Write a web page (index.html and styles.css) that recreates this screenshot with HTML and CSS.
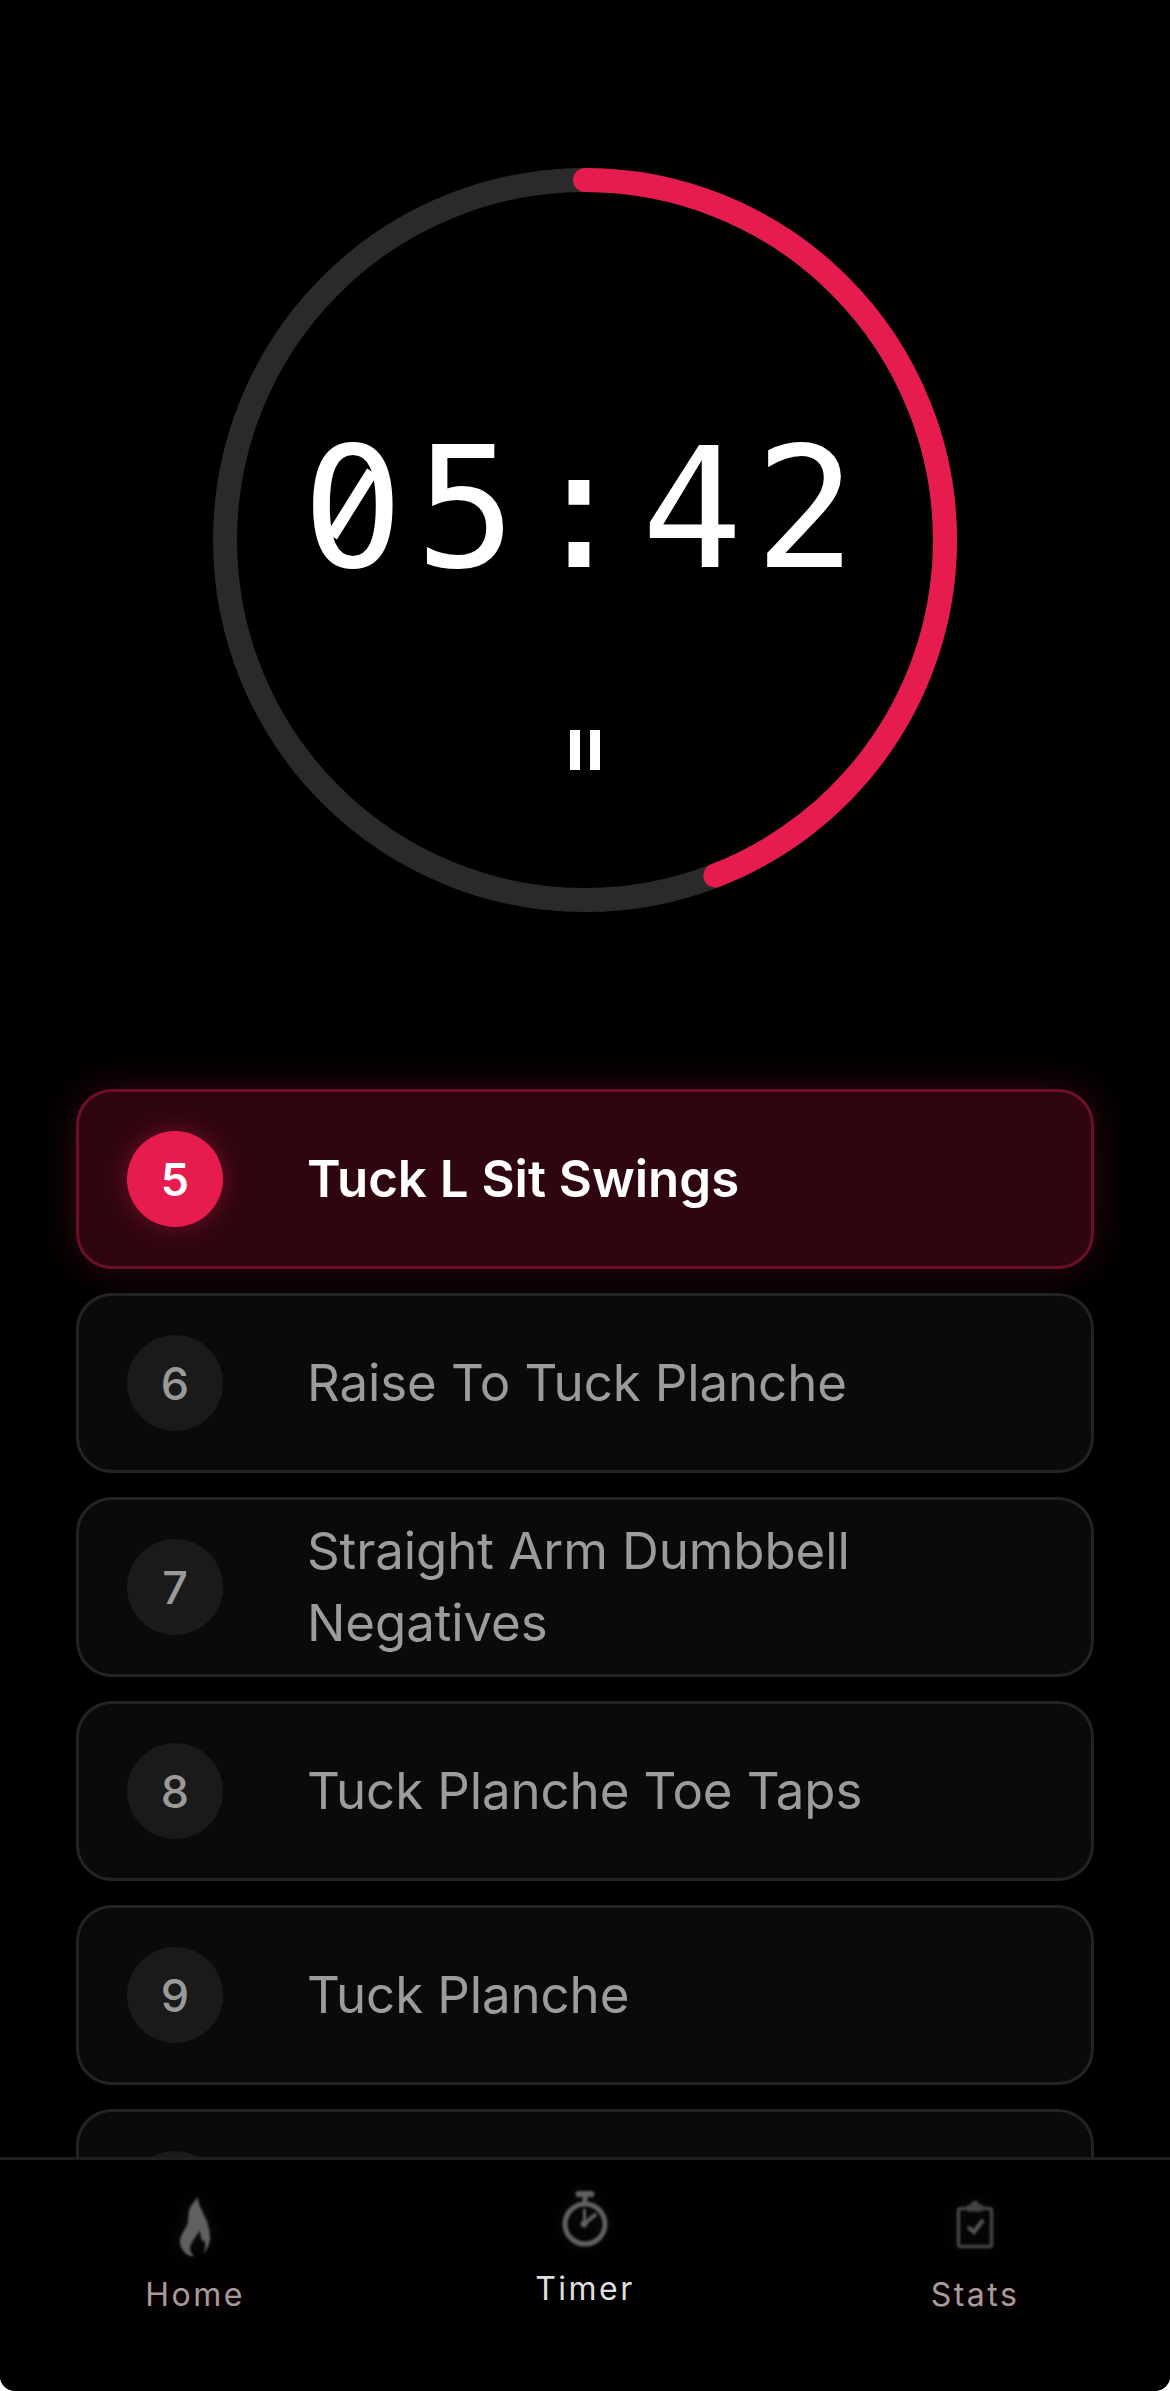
FILE: index.html
```html
<!DOCTYPE html>
<html lang="en">
<head>
    <meta charset="UTF-8">
    <meta name="viewport" content="width=device-width, initial-scale=1.0">
    <title>Workout Timer</title>
    <link rel="stylesheet" href="styles.css">
</head>
<body>

<div class="app">
    <section class="timer">
        <svg class="ring" viewBox="0 0 744 744">
            <circle class="ring-track" cx="372" cy="372" r="360"></circle>
            <circle class="ring-progress" cx="372" cy="372" r="360" pathLength="100" stroke-dasharray="44.1 100" transform="rotate(-90 372 372)"></circle>
        </svg>
        <div class="time"><span class="zero">0</span>5:42</div>
        <div class="pause"><span></span><span></span></div>
    </section>

    <div class="list">
        <div class="item active">
            <div class="num">5</div>
            <div class="name">Tuck L Sit Swings</div>
        </div>
        <div class="item">
            <div class="num">6</div>
            <div class="name">Raise To Tuck Planche</div>
        </div>
        <div class="item">
            <div class="num">7</div>
            <div class="name">Straight Arm Dumbbell Negatives</div>
        </div>
        <div class="item">
            <div class="num">8</div>
            <div class="name">Tuck Planche Toe Taps</div>
        </div>
        <div class="item">
            <div class="num">9</div>
            <div class="name">Tuck Planche</div>
        </div>
        <div class="item">
            <div class="num">10</div>
            <div class="name"></div>
        </div>
    </div>

    <nav class="tabs">
        <div class="tab">
            <svg class="tab-icon" viewBox="0 0 60 72">
                <path fill="#606060" d="M32.7 7C33 13 37 21 40 27C43 33 45 41 45 48C45 54 42 60 37.7 64C40 60 41 56 39.5 50L37.3 52L34.3 40C33 45 26 51 25 58C24.7 61 27 64 29 66L25 66C19 63 15 58 15 51C15 45 20 40 22 35C24 30 23 27 24 20C25 16 30 11 32.7 7Z"></path>
            </svg>
            <span>Home</span>
        </div>
        <div class="tab current">
            <svg class="tab-icon" viewBox="0 0 60 72">
                <g fill="none" stroke="#606060" stroke-width="5">
                    <circle cx="30" cy="40" r="20"></circle>
                    <path d="M30 18V10"></path>
                    <path d="M23.5 10H36.5" stroke-width="6" stroke-linecap="round"></path>
                    <path d="M29 40L40 31" stroke-width="4" stroke-linecap="round"></path>
                    <path d="M29.5 40V26" stroke-width="3" stroke-linecap="round"></path>
                </g>
                <circle cx="29" cy="40" r="3.5" fill="#606060"></circle>
            </svg>
            <span>Timer</span>
        </div>
        <div class="tab">
            <svg class="tab-icon" viewBox="0 0 60 72">
                <g fill="none" stroke="#444" stroke-width="3.5">
                    <rect x="13.5" y="18.5" width="33" height="38" rx="2"></rect>
                    <path d="M24 20V16H27C28 11 32 11 33 16H36V20Z" fill="#444" stroke-width="3"></path>
                    <path d="M23 37L29 42L38 30" stroke="#555" stroke-width="4"></path>
                </g>
            </svg>
            <span>Stats</span>
        </div>
    </nav>
</div>

</body>
</html>
```

FILE: styles.css
```css
* {
    box-sizing: border-box;
}
html, body {
    margin: 0;
    padding: 0;
    background: #fff;
}
body {
    font-family: Inter, "Liberation Sans", sans-serif;
}
.app {
    width: 1170px;
    height: 2391px;
    overflow: hidden;
    position: relative;
    background: #000;
    border-radius: 0 0 15px 15px;
}
.timer {
    position: relative;
    width: 744px;
    height: 744px;
    margin: 0 auto;
    top: 168px;
}
.ring {
    display: block;
    width: 744px;
    height: 744px;
}
.ring circle {
    fill: none;
    stroke-width: 24;
}
.ring-track {
    stroke: #2a2a2c;
}
.ring-progress {
    stroke: #e61b4e;
    stroke-linecap: round;
}
.time {
    position: absolute;
    left: 0;
    right: 0;
    top: 241px;
    text-align: center;
    font-family: "DejaVu Sans Mono", monospace;
    font-size: 168px;
    line-height: 200px;
    letter-spacing: 12px;
    color: #fff;
}
/* slashed zero: the font only has a dotted one */
.zero {
    display: inline-block;
    position: relative;
}
.zero::before {
    content: "";
    position: absolute;
    left: 35px;
    top: 74px;
    width: 32px;
    height: 46px;
    border-radius: 50%;
    background: #000;
}
.zero::after {
    content: "";
    position: absolute;
    left: 44px;
    top: 57px;
    width: 12px;
    height: 76px;
    background: #fff;
    transform: rotate(32deg);
}
.pause {
    position: absolute;
    left: 0;
    right: 0;
    top: 562px;
    display: flex;
    justify-content: center;
    gap: 10px;
}
.pause span {
    width: 10px;
    height: 40px;
    background: #fff;
}
.list {
    position: absolute;
    top: 1089px;
    left: 76px;
    right: 76px;
    display: flex;
    flex-direction: column;
    gap: 24px;
}
.item {
    height: 180px;
    flex: none;
    display: flex;
    align-items: center;
    padding: 0 48px;
    gap: 84px;
    background: #0a0a0a;
    border: 3px solid #232324;
    border-radius: 36px;
}
.num {
    width: 96px;
    height: 96px;
    flex: none;
    border-radius: 50%;
    display: flex;
    align-items: center;
    justify-content: center;
    background: #1a1a1a;
    color: #9a9a9a;
    font-size: 45px;
    font-weight: 500;
}
.name {
    font-size: 51px;
    line-height: 72px;
    letter-spacing: -0.1px;
    color: #9c9c9c;
}
.item.active {
    background: #2f060f;
    border-color: #6b1029;
    box-shadow: 0 0 40px rgba(233, 30, 80, 0.22);
}
.active .num {
    background: #e61b4e;
    color: #fff;
    font-weight: 600;
    box-shadow: 0 0 24px rgba(233, 30, 80, 0.35);
}
.active .name {
    color: #fff;
    font-weight: 600;
    letter-spacing: 0;
}
.tabs {
    position: absolute;
    left: 0;
    right: 0;
    bottom: 0;
    height: 234px;
    background: #000;
    border-top: 3px solid #1f1f20;
    display: flex;
}
.tab {
    flex: 1;
    display: flex;
    flex-direction: column;
    align-items: center;
    padding-top: 30px;
    font-size: 32px;
    line-height: 36px;
    letter-spacing: 2.5px;
    color: #a59c9c;
    text-shadow: 0 0 14px rgba(233, 30, 80, 0.2);
}
.tab-icon {
    width: 60px;
    height: 72px;
    margin-bottom: 15px;
    filter: blur(0.8px) drop-shadow(0 0 8px rgba(255, 255, 255, 0.08));
}
.tab.current {
    padding-top: 24px;
    color: #dedede;
    text-shadow: none;
}
```
